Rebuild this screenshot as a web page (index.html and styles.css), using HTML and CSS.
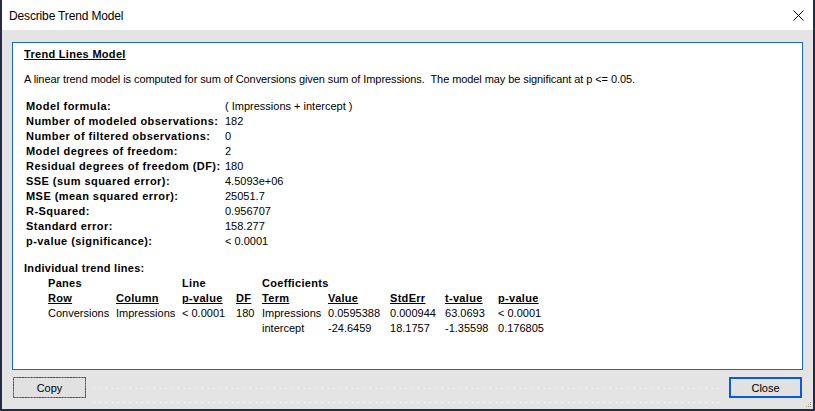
FILE: index.html
```html
<!DOCTYPE html>
<html lang="en">
<head>
<meta charset="utf-8">
<title>Describe Trend Model</title>
<link rel="stylesheet" href="styles.css">
</head>
<body>
<div class="window">
  <div class="titlebar">
    <span class="title">Describe Trend Model</span>
    <svg class="xicon" width="11" height="11" viewBox="0 0 11 11"><path d="M0.5 0.5 L10.5 10.5 M10.5 0.5 L0.5 10.5" stroke="#000" stroke-width="1" fill="none"/></svg>
  </div>
  <div class="content">
    <div class="panel">
      <div class="heading">Trend Lines Model</div>
      <p class="summary">A linear trend model is computed for sum of Conversions given sum of Impressions.&nbsp; The model may be significant at p &lt;= 0.05.</p>
      <div class="stats">
        <div class="label">Model formula:</div><div class="val">( Impressions + intercept )</div>
        <div class="label">Number of modeled observations:</div><div class="val">182</div>
        <div class="label">Number of filtered observations:</div><div class="val">0</div>
        <div class="label">Model degrees of freedom:</div><div class="val">2</div>
        <div class="label">Residual degrees of freedom (DF):</div><div class="val">180</div>
        <div class="label">SSE (sum squared error):</div><div class="val">4.5093e+06</div>
        <div class="label">MSE (mean squared error):</div><div class="val">25051.7</div>
        <div class="label">R-Squared:</div><div class="val">0.956707</div>
        <div class="label">Standard error:</div><div class="val">158.277</div>
        <div class="label">p-value (significance):</div><div class="val">&lt; 0.0001</div>
      </div>
      <div class="subhead">Individual trend lines:</div>
      <table class="trend">
        <colgroup>
          <col class="c-row"><col class="c-col"><col class="c-pv"><col class="c-df"><col class="c-term"><col class="c-val"><col class="c-se"><col class="c-tv"><col class="c-p">
        </colgroup>
        <tr class="grp"><th colspan="2">Panes</th><th colspan="2">Line</th><th colspan="5">Coefficients</th></tr>
        <tr class="hdr"><th><u>Row</u></th><th><u>Column</u></th><th><u>p-value</u></th><th><u>DF</u></th><th><u>Term</u></th><th><u>Value</u></th><th><u>StdErr</u></th><th><u>t-value</u></th><th><u>p-value</u></th></tr>
        <tr><td>Conversions</td><td>Impressions</td><td>&lt; 0.0001</td><td>180</td><td>Impressions</td><td>0.0595388</td><td>0.000944</td><td>63.0693</td><td>&lt; 0.0001</td></tr>
        <tr><td></td><td></td><td></td><td></td><td>intercept</td><td>-24.6459</td><td>18.1757</td><td>-1.35598</td><td>0.176805</td></tr>
      </table>
    </div>
  </div>
  <div class="footer">
    <button class="btn copy">Copy</button>
    <div class="dots"><div class="dotline top"></div><div class="dotline bottom"></div></div>
    <button class="btn close">Close</button>
  </div>
  <svg class="grip" width="7" height="7" viewBox="0 0 7 7"><rect x="5" y="1" width="1" height="1" fill="#8a90b8"/><rect x="3" y="3" width="1" height="1" fill="#c8a050"/><rect x="5" y="3" width="1" height="1" fill="#8a90b8"/><rect x="1" y="5" width="1" height="1" fill="#c8a050"/><rect x="3" y="5" width="1" height="1" fill="#8a90b8"/><rect x="5" y="5" width="1" height="1" fill="#c8a050"/></svg>
</div>
</body>
</html>
```
FILE: styles.css
```css
html, body {
  margin: 0;
  padding: 0;
}
body {
  width: 815px;
  height: 411px;
  overflow: hidden;
  font-family: "Liberation Sans", Arial, sans-serif;
  font-size: 11px;
  color: #000;
}
.window {
  position: relative;
  box-sizing: border-box;
  width: 815px;
  height: 411px;
  background: #e4e4e4;
  border-left: 2px solid #262b48;
  border-right: 2px solid #262b48;
  border-bottom: 2px solid #262b48;
  display: flex;
  flex-direction: column;
}
.titlebar {
  height: 30px;
  flex: none;
  background: #fff;
  display: flex;
  align-items: center;
  justify-content: space-between;
  padding: 0 9px 0 7px;
}
.title {
  font-size: 12px;
  letter-spacing: -0.15px;
  margin-top: 1px;
}
.xicon {
  display: block;
}
.content {
  flex: none;
  padding: 12px 10px 0 10px;
}
.panel {
  box-sizing: border-box;
  height: 328px;
  background: #fff;
  border: 1px solid #1c64d0;
  padding: 4px 11px 0 11px;
  line-height: 15px;
}
.heading,
.label,
.subhead,
.trend th {
  font-weight: bold;
  letter-spacing: 0.3px;
}
.heading {
  text-decoration: underline;
}
.summary {
  margin: 10px 0 12px 0;
  letter-spacing: -0.08px;
}
.stats {
  display: grid;
  grid-template-columns: 199px auto;
  margin-left: 2px;
}
.label {
  white-space: nowrap;
  letter-spacing: 0.45px;
}
.subhead {
  margin-top: 12px;
}
.trend {
  border-collapse: collapse;
  table-layout: fixed;
  margin-left: 24px;
  width: 510px;
}
.trend th, .trend td {
  padding: 0;
  text-align: left;
  white-space: nowrap;
  line-height: 15px;
}
.c-row { width: 68px; }
.c-col { width: 66px; }
.c-pv { width: 54px; }
.c-df { width: 26px; }
.c-term { width: 66px; }
.c-val { width: 62px; }
.c-se { width: 55px; }
.c-tv { width: 53px; }
.c-p { width: 60px; }
.footer {
  flex: 1;
  display: flex;
  align-items: flex-start;
  padding: 7px 11px 0 11px;
}
.btn {
  box-sizing: border-box;
  width: 73px;
  height: 21px;
  margin: 0;
  padding: 0;
  background: #e1e1e1;
  font-family: "Liberation Sans", Arial, sans-serif;
  font-size: 11px;
  color: #000;
  flex: none;
}
.copy {
  border: 1px solid transparent;
  border-image: repeating-linear-gradient(45deg, #d4661c 0 1px, #2a56b0 1px 2px) 1;
}
.close {
  border: 2px solid #0a5cd6;
}
.dots {
  flex: 1;
  margin: 0 10px 0 8px;
  padding-top: 11px;
}
.dotline {
  height: 1px;
  background: repeating-linear-gradient(90deg, #ffffff 0 1px, transparent 1px 6px);
}
.dotline.bottom {
  margin-top: 13px;
}
.grip {
  position: absolute;
  right: 1px;
  bottom: 1px;
}
```
